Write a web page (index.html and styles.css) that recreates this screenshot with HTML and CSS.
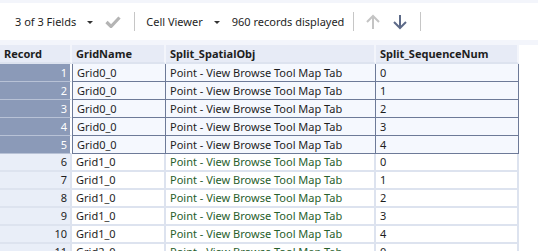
FILE: index.html
```html
<!DOCTYPE html>
<html lang="en">
<head>
  <meta charset="UTF-8">
  <title>Browse</title>
  <link rel="stylesheet" href="styles.css">
</head>
<body>

  <div class="toolbar">
    <span class="tb-text">3 of 3 Fields</span>
    <span class="caret"></span>
    <svg class="check" width="16" height="12" viewBox="0 0 16 12">
      <path d="M1.5 6 L6 10.5 L14.5 1.5" fill="none" stroke="#b4b4b4" stroke-width="3.2"/>
    </svg>
    <span class="sep"></span>
    <span class="tb-text">Cell Viewer</span>
    <span class="caret"></span>
    <span class="tb-text records">960 records displayed</span>
    <span class="sep"></span>
    <svg class="arrow" width="16" height="16" viewBox="0 0 16 16">
      <path d="M8 15 V2 M2 8 L8 2 L14 8" fill="none" stroke="#c4c4c4" stroke-width="2"/>
    </svg>
    <svg class="arrow" width="16" height="16" viewBox="0 0 16 16">
      <path d="M8 1 V14 M2 8 L8 14 L14 8" fill="none" stroke="#5d6a88" stroke-width="2"/>
    </svg>
    <span class="sep"></span>
  </div>

  <div class="grid-wrap">
    <table class="grid">
      <thead>
        <tr>
          <th class="rec">Record</th>
          <th>GridName</th>
          <th>Split_SpatialObj</th>
          <th>Split_SequenceNum</th>
        </tr>
      </thead>
      <tbody id="rows"></tbody>
    </table>
  </div>

  <script>
    var rows = [];
    for (var i = 0; i < 11; i++) {
      rows.push({
        rec: i + 1,
        grid: 'Grid' + Math.floor(i / 5) + '_0',
        obj: 'Point - View Browse Tool Map Tab',
        seq: i % 5
      });
    }

    var html = '';
    rows.forEach(function (r, i) {
      var cls = i < 5 ? 'sel' : '';
      html += '<tr class="' + cls + '">' +
        '<td class="rec">' + r.rec + '</td>' +
        '<td>' + r.grid + '</td>' +
        '<td class="obj">' + r.obj + '</td>' +
        '<td>' + r.seq + '</td>' +
        '</tr>';
    });
    document.getElementById('rows').innerHTML = html;
  </script>

</body>
</html>
```

FILE: styles.css
```css
body {
  margin: 0;
  padding: 0;
  background-color: #f3f5fb;
  font-family: "Noto Sans", "Open Sans", sans-serif;
  font-size: 11px;
  color: #1e1e1e;
  overflow: hidden;
}

.toolbar {
  margin-top: 3px;
  height: 37px;
  background-color: #fff;
  display: flex;
  align-items: center;
  padding-left: 15px;
  font-size: 11px;
}

.tb-text {
  white-space: nowrap;
}

.caret {
  width: 0;
  height: 0;
  border-left: 3px solid transparent;
  border-right: 3px solid transparent;
  border-top: 3px solid #333;
  margin: 1px 12px 0 11px;
}

.check {
  margin-right: 12px;
}

.sep {
  width: 1px;
  height: 19px;
  background-color: #c6c6c6;
  margin: 0 11px 0 1px;
}

.records {
  margin-right: 8px;
}

.arrow {
  margin-right: 11px;
}

.grid-wrap {
  margin-top: 5px;
  background-color: #fff;
  height: 210px;
}

.grid {
  border-collapse: separate;
  border-spacing: 0;
  table-layout: fixed;
  width: 519px;
  background-color: #fff;
}

.grid th,
.grid td {
  height: 16px;
  padding: 0 4px;
  text-align: left;
  white-space: nowrap;
  overflow: hidden;
  line-height: 16px;
  border-right: 2px solid #dde3ef;
  border-bottom: 2px solid #dde3ef;
}

.grid th {
  height: 17px;
  background-color: #e7ebf6;
  font-weight: bold;
  border-color: #f3f5fb;
  border-bottom-color: #dde3ef;
}

.grid th:nth-child(1) { width: 62px; }
.grid th:nth-child(2) { width: 84px; }
.grid th:nth-child(3) { width: 200px; }
.grid th:nth-child(4) { width: 133px; }

.grid td.rec {
  background-color: #e9eef8;
  text-align: right;
  padding-right: 3px;
  padding-left: 0;
}

.grid td.obj {
  color: #28602c;
}

.grid tr.sel td {
  background-color: #f5f8fe;
  border-right: 1px solid #6d7a98;
  border-bottom: 1px solid #6d7a98;
  height: 17px;
  color: #1e1e1e;
}

.grid tr.sel td:nth-child(2) {
  border-left: 1px solid #6d7a98;
}

.grid tr.sel td.rec {
  background-color: #8b9ab8;
  color: #fff;
  border-right: 2px solid #fff;
  border-bottom-color: #b8c2d6;
}
```
